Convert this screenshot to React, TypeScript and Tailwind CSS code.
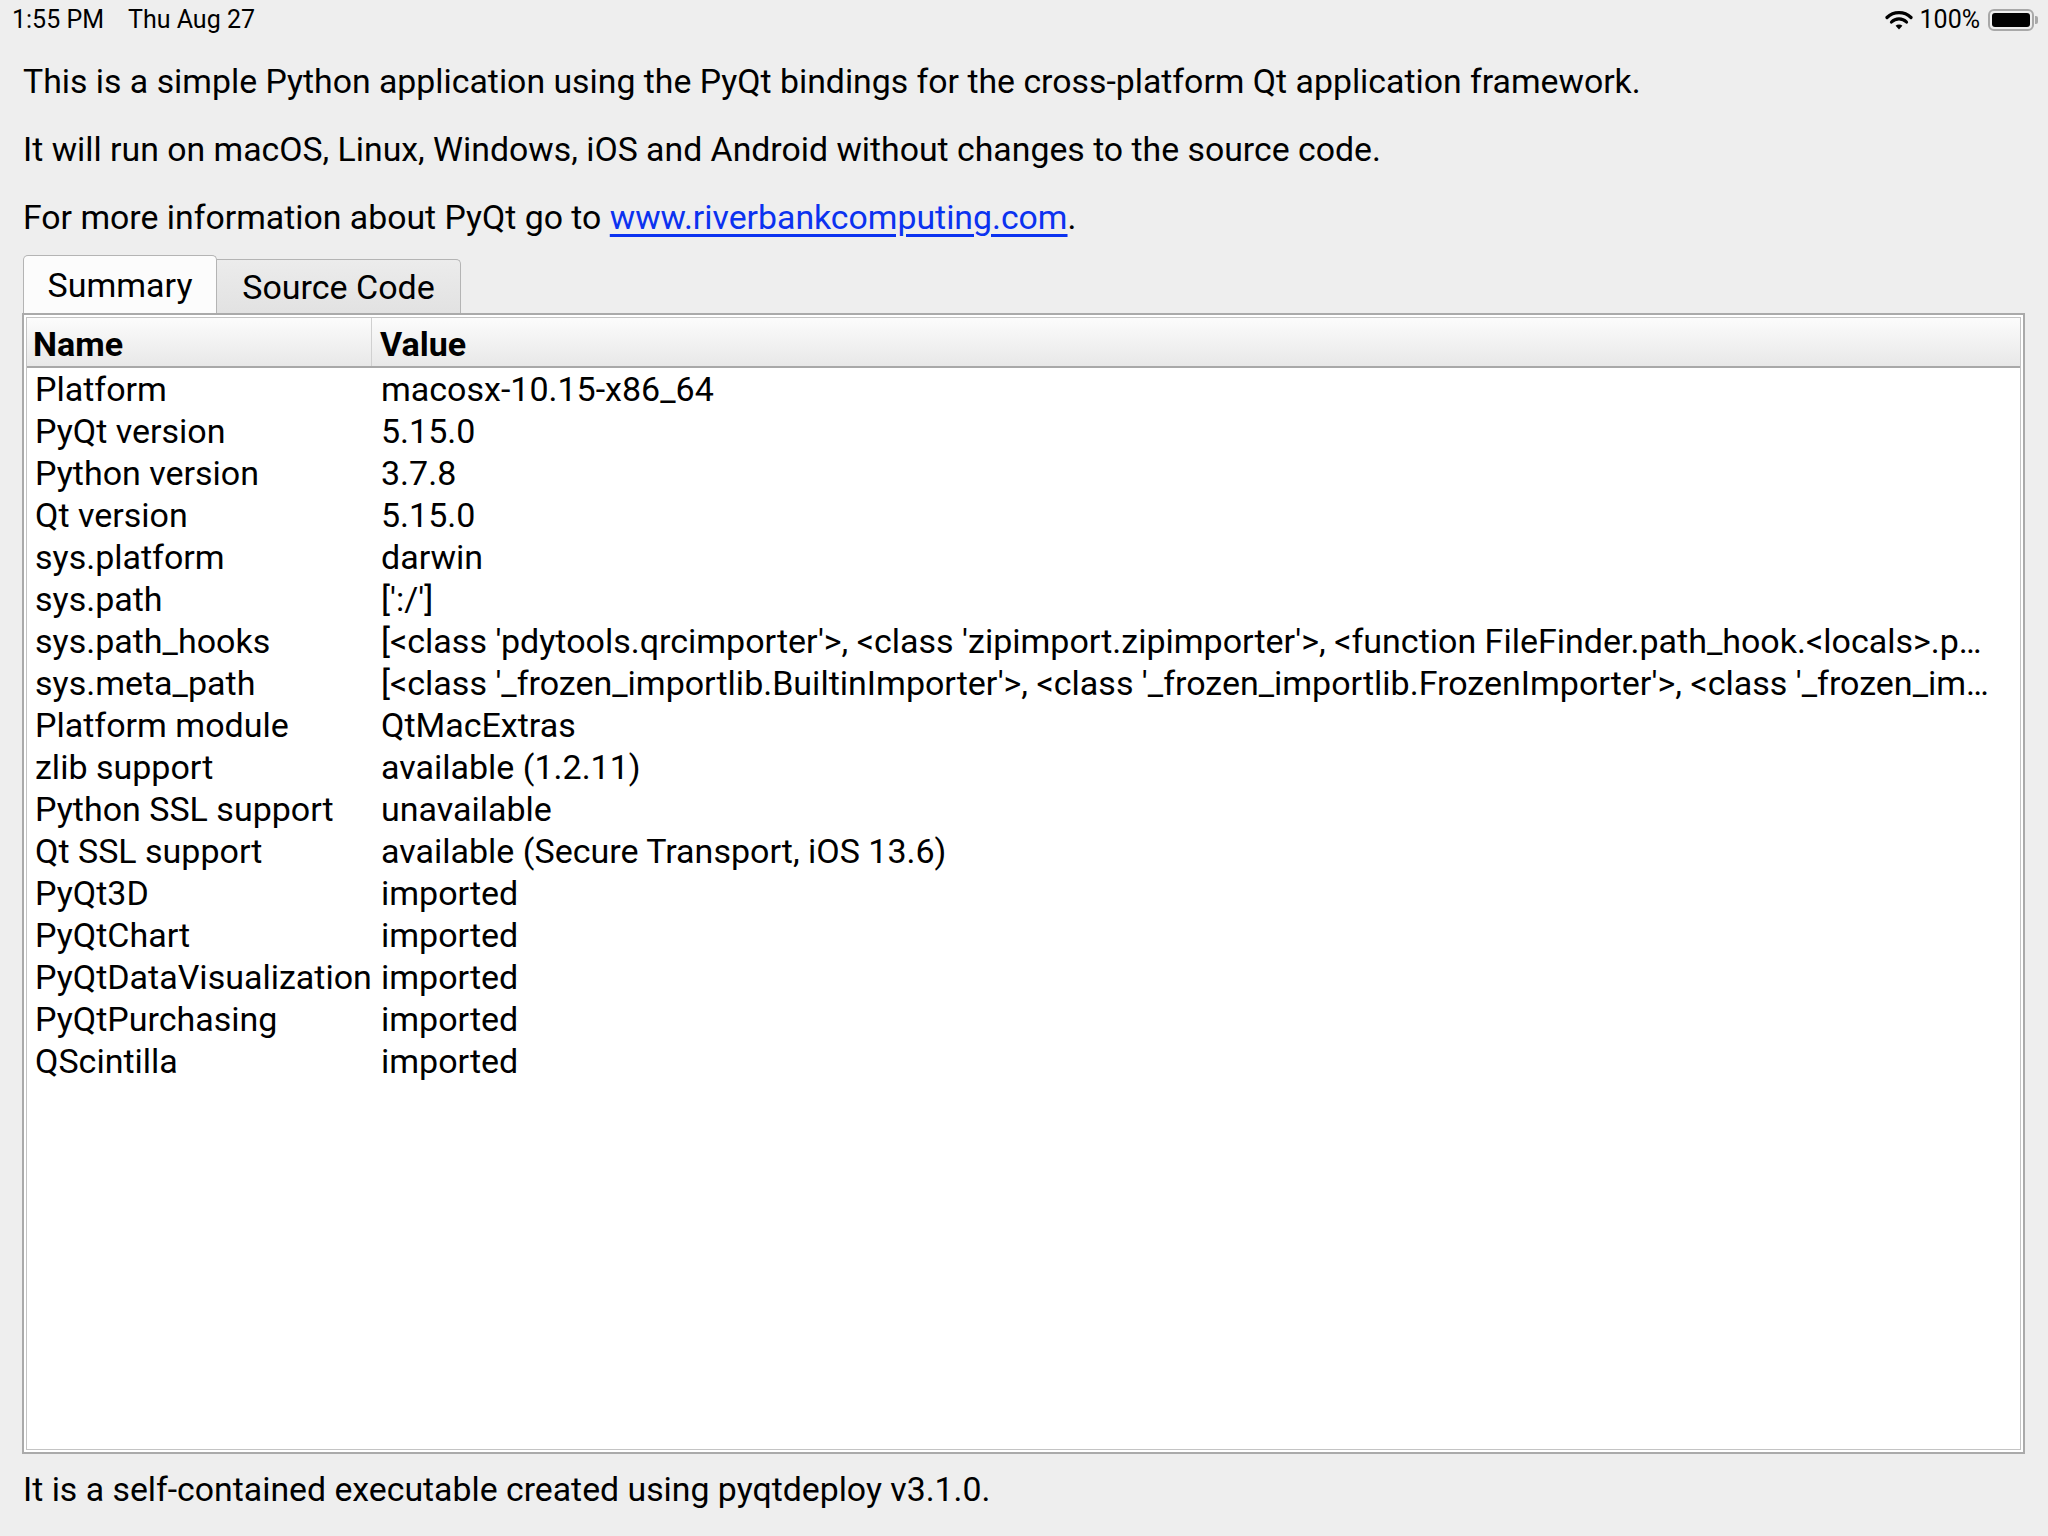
import React from 'react';

const rows: [string, string][] = [
  ['Platform', 'macosx-10.15-x86_64'],
  ['PyQt version', '5.15.0'],
  ['Python version', '3.7.8'],
  ['Qt version', '5.15.0'],
  ['sys.platform', 'darwin'],
  ['sys.path', "[':/']"],
  ['sys.path_hooks', "[<class 'pdytools.qrcimporter'>, <class 'zipimport.zipimporter'>, <function FileFinder.path_hook.<locals>.p…"],
  ['sys.meta_path', "[<class '_frozen_importlib.BuiltinImporter'>, <class '_frozen_importlib.FrozenImporter'>, <class '_frozen_im…"],
  ['Platform module', 'QtMacExtras'],
  ['zlib support', 'available (1.2.11)'],
  ['Python SSL support', 'unavailable'],
  ['Qt SSL support', 'available (Secure Transport, iOS 13.6)'],
  ['PyQt3D', 'imported'],
  ['PyQtChart', 'imported'],
  ['PyQtDataVisualization', 'imported'],
  ['PyQtPurchasing', 'imported'],
  ['QScintilla', 'imported'],
];

const StatusBar = () => (
  <div className="h-[40px] flex items-center justify-between pl-[12px] pr-[10px] text-[25px]">
    <div className="flex gap-[24px]">
      <span>1:55 PM</span>
      <span>Thu Aug 27</span>
    </div>
    <div className="flex items-center">
      <svg width="28" height="22" viewBox="0 0 28 22" className="mr-[7px]">
        <path d="M2 8.5 A17 17 0 0 1 26 8.5" stroke="black" strokeWidth="3.2" fill="none" strokeLinecap="round" />
        <path d="M6.5 13 A10.5 10.5 0 0 1 21.5 13" stroke="black" strokeWidth="3.2" fill="none" strokeLinecap="round" />
        <path d="M14 20.5 L10.6 16.8 A4.8 4.8 0 0 1 17.4 16.8 Z" fill="black" />
      </svg>
      <span>100%</span>
      <div className="ml-[8px] flex items-center">
        <div className="w-[46px] h-[22px] rounded-[6px] border-2 border-[#a8a8a8] p-[2px]">
          <div className="w-full h-full rounded-[3px] bg-black" />
        </div>
        <div className="w-[3px] h-[8px] rounded-r-[2px] bg-[#a8a8a8] ml-[1px]" />
      </div>
    </div>
  </div>
);

export default function App() {
  return (
    <div className="w-[2048px] h-[1536px] bg-[#eeeeee] flex flex-col text-black font-['Roboto',sans-serif]">
      <StatusBar />
      <div className="mt-[8px] pl-[23px] text-[33.8px] leading-[68px]">
        <p>This is a simple Python application using the PyQt bindings for the cross-platform Qt application framework.</p>
        <p>It will run on macOS, Linux, Windows, iOS and Android without changes to the source code.</p>
        <p>
          For more information about PyQt go to{' '}
          <a className="text-[#0b32f0] underline underline-offset-[5px]" href="#">
            www.riverbankcomputing.com
          </a>
          .
        </p>
      </div>
      <div className="mt-[3px] ml-[23px] flex items-end h-[58px] text-[34px]">
        <div className="w-[194px] h-[58px] bg-[#fcfcfc] border border-b-0 border-[#b4b4b4] rounded-t-[5px] flex items-center justify-center pt-[2px]">
          Summary
        </div>
        <div className="w-[244px] h-[54px] bg-gradient-to-b from-[#ececec] to-[#e2e2e2] border border-l-0 border-b-0 border-[#b4b4b4] rounded-tr-[5px] flex items-center justify-center pt-[2px]">
          Source Code
        </div>
      </div>
      <div className="ml-[22px] w-[2003px] h-[1141px] border-2 border-[#aaaaaa] bg-white p-[2px] flex">
        <div className="flex-1 min-w-0 overflow-hidden border border-[#c4c4c4] flex flex-col text-[34px]">
          <div className="h-[50px] shrink-0 flex items-stretch bg-gradient-to-b from-[#fcfcfc] to-[#e8e8e8] border-b-2 border-[#a8a8a8] font-bold">
            <div className="w-[345px] shrink-0 border-r border-[#d0d0d0] pl-[6px] flex items-center pt-[5px]">Name</div>
            <div className="flex-1 min-w-0 pl-[8px] flex items-center pt-[5px]">Value</div>
          </div>
          {rows.map(([name, value]) => (
            <div key={name} className="h-[42px] shrink-0 flex items-center pt-[1px]">
              <div className="w-[345px] shrink-0 pl-[8px] whitespace-nowrap overflow-hidden">{name}</div>
              <div className="flex-1 min-w-0 pl-[9px] pr-[10px] whitespace-nowrap overflow-hidden text-ellipsis">{value}</div>
            </div>
          ))}
        </div>
      </div>
      <div className="mt-[2px] pl-[23px] text-[33.8px] leading-[68px]">
        It is a self-contained executable created using pyqtdeploy v3.1.0.
      </div>
    </div>
  );
}
